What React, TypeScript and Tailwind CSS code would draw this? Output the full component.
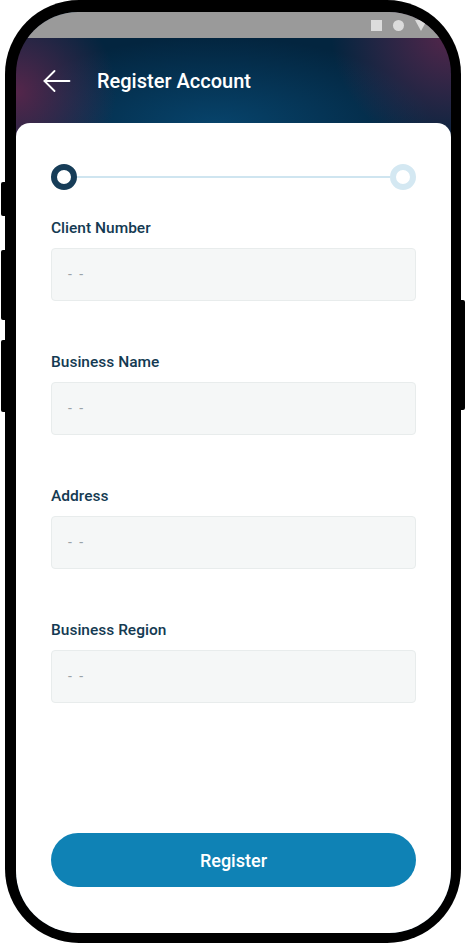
import React from 'react';

// ── Form fields shown on step one ─────────────────────────────────────────
const FIELDS = ['Client Number', 'Business Name', 'Address', 'Business Region'];

const MEDIUM = { fontFamily: '"Roboto Medium", Roboto, "Noto Sans", sans-serif' };

function BackArrow() {
  return (
    <svg width="28" height="22" viewBox="0 0 28 22" fill="none" stroke="white" strokeWidth="1.8" strokeLinecap="round" strokeLinejoin="round">
      <path d="M1.5 11H26.5" />
      <path d="M11.5 1L1.5 11L11.5 21" />
    </svg>
  );
}

function Stepper() {
  return (
    <div className="flex items-center h-[26px]">
      <div className="w-[26px] h-[26px] rounded-full border-[6px] border-[#173d58] bg-white flex-shrink-0" />
      <div className="flex-1 h-[2px] bg-[#cfe5f0]" />
      <div className="w-[26px] h-[26px] rounded-full border-[6px] border-[#d4e8f2] bg-white flex-shrink-0" />
    </div>
  );
}

function Field({ label, first }: { label: string; first?: boolean }) {
  return (
    <div className={first ? 'mt-[28px]' : 'mt-[51px]'}>
      <div className="text-[15.5px] leading-[20px] text-[#143a52]" style={MEDIUM}>{label}</div>
      <div className="mt-[10px] h-[53px] rounded-[4px] bg-[#f5f7f7] border border-[#e8ecec] flex items-center pl-[16px]">
        <span className="text-[14px] text-[#9aa3a8] tracking-[2px]">- -</span>
      </div>
    </div>
  );
}

export default function App() {
  return (
    <div className="relative w-[466px] h-[945px] bg-white" style={{ fontFamily: 'Roboto, "Noto Sans", sans-serif' }}>
      {/* side buttons */}
      <div className="absolute left-[1px] top-[182px] w-[6px] h-[34px] bg-black rounded-l-[2px]" />
      <div className="absolute left-[1px] top-[250px] w-[6px] h-[70px] bg-black rounded-l-[2px]" />
      <div className="absolute left-[1px] top-[340px] w-[6px] h-[72px] bg-black rounded-l-[2px]" />
      <div className="absolute left-[459px] top-[300px] w-[6px] h-[110px] bg-black rounded-r-[2px]" />

      {/* phone body */}
      <div className="absolute left-[5px] top-0 w-[456px] h-[943px] rounded-[74px] bg-black pt-[12px] pb-[10px] pl-[11px] pr-[10px]">
        <div className="w-full h-full rounded-[62px] overflow-hidden flex flex-col bg-[radial-gradient(circle_at_0px_80px,#55264b_0px,rgba(85,38,75,0)_100px),radial-gradient(circle_at_435px_20px,#55264b_0px,rgba(85,38,75,0)_120px),radial-gradient(ellipse_220px_90px_at_200px_115px,#07446c_0%,rgba(7,68,108,0)_100%),linear-gradient(#03253f,#03253f)]">
          {/* status bar */}
          <div className="h-[26px] bg-[#9a9a9a] flex items-center justify-end gap-[11px] pr-[24px] flex-shrink-0">
            <div className="w-[11px] h-[11px] bg-[#dcdcdc]" />
            <div className="w-[11px] h-[11px] rounded-full bg-[#dcdcdc]" />
            <div className="w-0 h-0 border-l-[6px] border-r-[6px] border-t-[11px] border-l-transparent border-r-transparent border-t-[#dcdcdc]" />
          </div>

          {/* header */}
          <div className="h-[85px] flex items-center pl-[27px] flex-shrink-0">
            <BackArrow />
            <span className="ml-[26px] text-[20px] text-white" style={MEDIUM}>Register Account</span>
          </div>

          {/* card */}
          <div className="flex-1 bg-white rounded-t-[14px] px-[35px] pt-[41px] pb-[46px] flex flex-col">
            <Stepper />
            {FIELDS.map((f, i) => (
              <Field key={f} label={f} first={i === 0} />
            ))}
            <button className="mt-auto h-[54px] rounded-full bg-[#0f82b5] text-white text-[18px]" style={MEDIUM}>
              Register
            </button>
          </div>
        </div>
      </div>
    </div>
  );
}
